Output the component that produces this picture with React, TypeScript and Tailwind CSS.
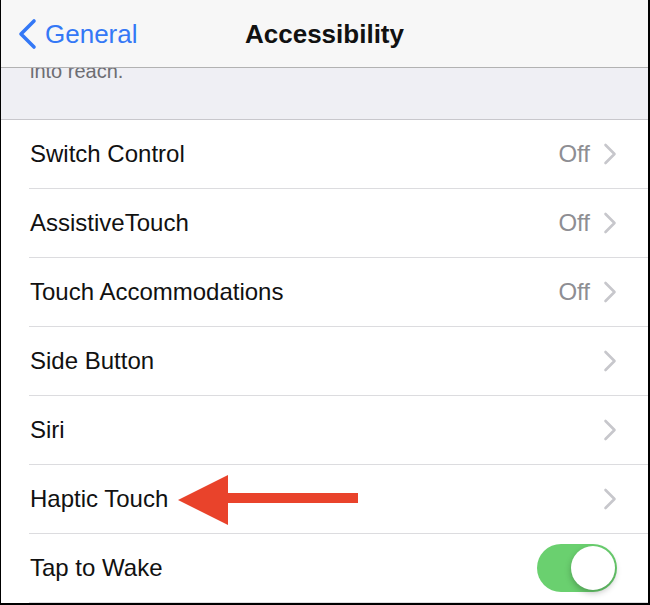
import React from "react";

type Row = { label: string; value?: string; chevron?: boolean; toggle?: boolean; arrow?: boolean };

const rows: Row[] = [
  { label: "Switch Control", value: "Off", chevron: true },
  { label: "AssistiveTouch", value: "Off", chevron: true },
  { label: "Touch Accommodations", value: "Off", chevron: true },
  { label: "Side Button", chevron: true },
  { label: "Siri", chevron: true },
  { label: "Haptic Touch", chevron: true, arrow: true },
  { label: "Tap to Wake", toggle: true },
];

function Chevron() {
  return (
    <svg width="14" height="22" viewBox="0 0 14 22" className="block">
      <path d="M2.5 2 L11.5 11 L2.5 20" fill="none" stroke="#c7c7cc" strokeWidth="2.6" strokeLinecap="round" strokeLinejoin="round" />
    </svg>
  );
}

export default function App() {
  return (
    <div className="w-[650px] h-[605px] bg-white border-l border-r-2 border-b-2 border-black overflow-hidden flex flex-col font-['Liberation_Sans',Arial,sans-serif]">
      <div className="h-[68px] shrink-0 bg-[#f7f7f7] border-b border-[#b2b2b2] grid grid-cols-[1fr_auto_1fr] items-center">
        <div className="flex items-center pl-[15px] text-[#3478f6]">
          <svg width="24" height="32" viewBox="0 0 24 32" className="block">
            <path d="M18 3 L5 16 L18 29" fill="none" stroke="#3478f6" strokeWidth="3.6" strokeLinecap="round" strokeLinejoin="round" />
          </svg>
          <span className="ml-[5px] text-[26px] leading-none">General</span>
        </div>
        <div className="text-[26px] leading-none font-semibold text-[#111]">Accessibility</div>
        <div />
      </div>
      <div className="h-[52px] shrink-0 bg-[#efeff4] border-b border-[#c8c7cc] overflow-hidden">
        <div className="-mt-[7px] pl-[29px] text-[20px] leading-[20px] text-[#6d6d72]">into reach.</div>
      </div>
      {rows.map((r) => (
        <div key={r.label} className="h-[69px] shrink-0 relative flex">
          <div className="ml-[28px] flex-1 flex items-center border-b border-[#dcdcdf] pr-[31px]">
            <span className="pl-[1px] text-[24px] text-[#111]">{r.label}</span>
            <div className="ml-auto flex items-center">
              {r.value && <span className="text-[24px] text-[#8e8e93] mr-[13px]">{r.value}</span>}
              {r.chevron && <Chevron />}
              {r.toggle && (
                <div className="w-[80px] h-[48px] rounded-full bg-[#6ad06f] flex items-center justify-end p-[2px]">
                  <div className="w-[44px] h-[44px] rounded-full bg-white shadow-[0_3px_6px_rgba(0,0,0,0.25)]" />
                </div>
              )}
            </div>
          </div>
          {r.arrow && (
            <svg width="184" height="54" viewBox="0 0 184 54" className="absolute left-[174px] top-[9px]">
              <polygon points="3,26 53,1 53,51" fill="#e9432b" />
              <rect x="50" y="19" width="133" height="10" fill="#e9432b" />
            </svg>
          )}
        </div>
      ))}
    </div>
  );
}
